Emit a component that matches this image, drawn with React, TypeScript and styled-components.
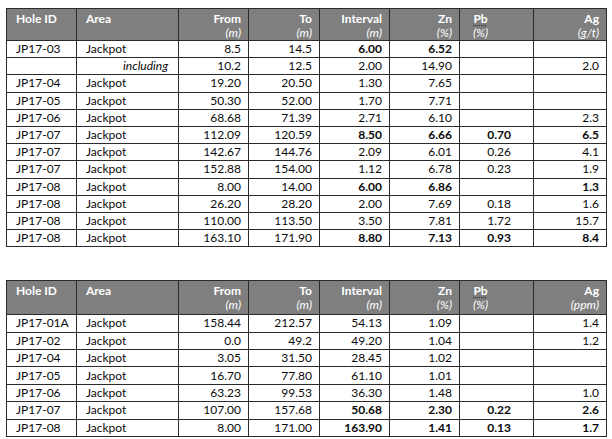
import React from "react";
import styled, { createGlobalStyle, css } from "styled-components";

const Global = createGlobalStyle`
  html, body { margin: 0; padding: 0; background: #ffffff; }
  body { font-family: Lato, "Open Sans", sans-serif; }
`;

const Page = styled.div`
  padding: 8px 0 0 6px;
  display: flex;
  flex-direction: column;
  gap: 33px;
`;

const Table = styled.table`
  border-collapse: collapse;
  table-layout: fixed;
  width: 600px;
  font-size: 12px;
  color: #0a0a0a;
  border: 1px solid #2b2b2b;
`;

type Align = "left" | "right" | "pb";

const HeadCell = styled.th<{ $align: Align }>`
  background: #7f7f7f;
  color: #ffffff;
  font-weight: 700;
  vertical-align: top;
  border: 1px solid #2b2b2b;
  padding: 3px 7px 0 9px;
  height: 28px;
  line-height: 14px;
  text-align: ${(p) => (p.$align === "left" ? "left" : p.$align === "pb" ? "center" : "right")};
  ${(p) => p.$align === "pb" && css`padding-right: 32px; padding-left: 0;`}
`;

const Unit = styled.div`
  font-style: italic;
  font-weight: 400;
`;

const PbLabel = styled.span`
  text-decoration: underline dotted #333;
  text-underline-offset: 2px;
`;

const Row = styled.tr<{ $h: number }>`
  height: ${(p) => p.$h}px;
`;

const Cell = styled.td<{ $align: Align; $bold?: boolean; $italic?: boolean }>`
  border: 1px solid #2b2b2b;
  padding: 0 7px 0 9px;
  line-height: 14px;
  white-space: nowrap;
  font-weight: ${(p) => (p.$bold ? 700 : 400)};
  font-style: ${(p) => (p.$italic ? "italic" : "normal")};
  text-align: ${(p) => (p.$align === "left" ? "left" : "right")};
  ${(p) => p.$align === "pb" && css`padding-right: 22px;`}
  ${(p) => p.$italic && css`padding-right: 10px;`}
`;

const widths = [70, 102, 70, 71, 70, 70, 74, 73];

type Col = { label: string; unit?: string; align: Align };
const cols = (agUnit: string): Col[] => [
  { label: "Hole ID", align: "left" },
  { label: "Area", align: "left" },
  { label: "From", unit: "(m)", align: "right" },
  { label: "To", unit: "(m)", align: "right" },
  { label: "Interval", unit: "(m)", align: "right" },
  { label: "Zn", unit: "(%)", align: "right" },
  { label: "Pb", unit: "(%)", align: "pb" },
  { label: "Ag", unit: agUnit, align: "right" },
];

// A row: values; a trailing "*" marks bold, a leading "~" marks italic
type RowData = string[];

const table1: RowData[] = [
  ["JP17-03", "Jackpot", "8.5", "14.5", "6.00*", "6.52*", "", ""],
  ["", "~including", "10.2", "12.5", "2.00", "14.90", "", "2.0"],
  ["JP17-04", "Jackpot", "19.20", "20.50", "1.30", "7.65", "", ""],
  ["JP17-05", "Jackpot", "50.30", "52.00", "1.70", "7.71", "", ""],
  ["JP17-06", "Jackpot", "68.68", "71.39", "2.71", "6.10", "", "2.3"],
  ["JP17-07", "Jackpot", "112.09", "120.59", "8.50*", "6.66*", "0.70*", "6.5*"],
  ["JP17-07", "Jackpot", "142.67", "144.76", "2.09", "6.01", "0.26", "4.1"],
  ["JP17-07", "Jackpot", "152.88", "154.00", "1.12", "6.78", "0.23", "1.9"],
  ["JP17-08", "Jackpot", "8.00", "14.00", "6.00*", "6.86*", "", "1.3*"],
  ["JP17-08", "Jackpot", "26.20", "28.20", "2.00", "7.69", "0.18", "1.6"],
  ["JP17-08", "Jackpot", "110.00", "113.50", "3.50", "7.81", "1.72", "15.7"],
  ["JP17-08", "Jackpot", "163.10", "171.90", "8.80*", "7.13*", "0.93*", "8.4*"],
];

const table2: RowData[] = [
  ["JP17-01A", "Jackpot", "158.44", "212.57", "54.13", "1.09", "", "1.4"],
  ["JP17-02", "Jackpot", "0.0", "49.2", "49.20", "1.04", "", "1.2"],
  ["JP17-04", "Jackpot", "3.05", "31.50", "28.45", "1.02", "", ""],
  ["JP17-05", "Jackpot", "16.70", "77.80", "61.10", "1.01", "", ""],
  ["JP17-06", "Jackpot", "63.23", "99.53", "36.30", "1.48", "", "1.0"],
  ["JP17-07", "Jackpot", "107.00", "157.68", "50.68*", "2.30*", "0.22*", "2.6*"],
  ["JP17-08", "Jackpot", "8.00", "171.00", "163.90*", "1.41*", "0.13*", "1.7*"],
];

function AssayTable({ rows, agUnit, headH, rowH }: { rows: RowData[]; agUnit: string; headH: number; rowH: number }) {
  const c = cols(agUnit);
  return (
    <Table>
      <colgroup>
        {widths.map((w, i) => (
          <col key={i} style={{ width: w }} />
        ))}
      </colgroup>
      <thead>
        <Row $h={headH}>
          {c.map((col) => (
            <HeadCell key={col.label} $align={col.align}>
              {col.label === "Pb" ? <PbLabel>Pb</PbLabel> : col.label}
              {col.unit && <Unit>{col.unit}</Unit>}
            </HeadCell>
          ))}
        </Row>
      </thead>
      <tbody>
        {rows.map((r, ri) => (
          <Row key={ri} $h={rowH}>
            {r.map((v, ci) => {
              const bold = v.endsWith("*");
              const italic = v.startsWith("~");
              const text = v.replace(/\*$/, "").replace(/^~/, "");
              const align: Align = italic ? "right" : c[ci].align;
              return (
                <Cell key={ci} $align={align} $bold={bold} $italic={italic}>
                  {text}
                </Cell>
              );
            })}
          </Row>
        ))}
      </tbody>
    </Table>
  );
}

export default function App() {
  return (
    <>
      <Global />
      <Page>
        <AssayTable rows={table1} agUnit="(g/t)" headH={32} rowH={17.2} />
        <AssayTable rows={table2} agUnit="(ppm)" headH={34} rowH={17.4} />
      </Page>
    </>
  );
}
